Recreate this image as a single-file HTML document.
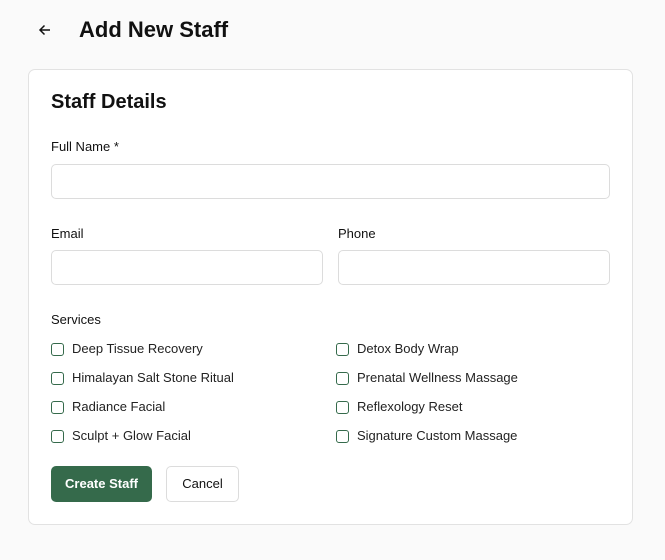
<!DOCTYPE html><html><head><style>
body{margin:0;background:#fafafa;font-family:"Liberation Sans",sans-serif;color:#111;width:665px;height:560px;position:relative;overflow:hidden}
.a{position:absolute}
.card{left:28px;top:69px;width:605px;height:456px;background:#fff;border:1px solid #e2e2e2;border-radius:7px;box-sizing:border-box}
.lbl{font-size:13px;font-weight:500;color:#111}
.inp{border:1px solid #dcdcdc;border-radius:5px;height:35px;box-sizing:border-box;background:#fff}
.cb{width:13px;height:13px;border:1px solid #356a4b;border-radius:3px;box-sizing:border-box}
.ct{font-size:13px;color:#222}
</style></head><body>
<svg class="a" style="left:37px;top:22px" width="16" height="16" viewBox="0 0 16 16"><path d="M13 8H3M7.5 3.5L3 8l4.5 4.5" fill="none" stroke="#111" stroke-width="1.5"/></svg>
<div class="a" style="left:79px;top:17px;font-size:22px;font-weight:bold">Add New Staff</div>
<div class="a card"></div>
<div class="a" style="left:51px;top:91px;font-size:20px;font-weight:bold">Staff Details</div>
<div class="a lbl" style="left:51px;top:139px">Full Name *</div>
<div class="a inp" style="left:51px;top:164px;width:559px"></div>
<div class="a lbl" style="left:51px;top:226px">Email</div>
<div class="a lbl" style="left:338px;top:226px">Phone</div>
<div class="a inp" style="left:51px;top:250px;width:272px"></div>
<div class="a inp" style="left:338px;top:250px;width:272px"></div>
<div class="a lbl" style="left:51px;top:312px">Services</div>
<div class="a cb" style="left:51px;top:343px"></div><div class="a ct" style="left:72px;top:341px">Deep Tissue Recovery</div>
<div class="a cb" style="left:51px;top:372px"></div><div class="a ct" style="left:72px;top:370px">Himalayan Salt Stone Ritual</div>
<div class="a cb" style="left:51px;top:401px"></div><div class="a ct" style="left:72px;top:399px">Radiance Facial</div>
<div class="a cb" style="left:51px;top:430px"></div><div class="a ct" style="left:72px;top:428px">Sculpt + Glow Facial</div>
<div class="a cb" style="left:336px;top:343px"></div><div class="a ct" style="left:357px;top:341px">Detox Body Wrap</div>
<div class="a cb" style="left:336px;top:372px"></div><div class="a ct" style="left:357px;top:370px">Prenatal Wellness Massage</div>
<div class="a cb" style="left:336px;top:401px"></div><div class="a ct" style="left:357px;top:399px">Reflexology Reset</div>
<div class="a cb" style="left:336px;top:430px"></div><div class="a ct" style="left:357px;top:428px">Signature Custom Massage</div>
<div class="a" style="left:51px;top:466px;width:101px;height:36px;background:#356a4b;border-radius:5px;color:#fff;font-size:13px;font-weight:bold;line-height:36px;text-align:center">Create Staff</div>
<div class="a" style="left:166px;top:466px;width:73px;height:36px;border:1px solid #dcdcdc;box-sizing:border-box;border-radius:5px;background:#fff;font-size:13px;font-weight:500;line-height:34px;text-align:center">Cancel</div>
</body></html>
